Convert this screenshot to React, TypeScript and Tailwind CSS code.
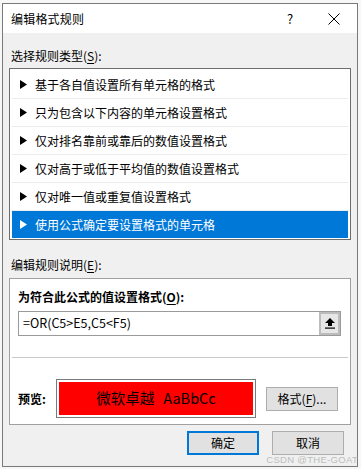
import React from "react";

const font = { fontFamily: '"Noto Sans CJK SC", "Noto Sans", sans-serif' };

function Tri({ white }: { white?: boolean }) {
  return (
    <svg width="7" height="9" viewBox="0 0 7 9" className="shrink-0">
      <polygon points="0,0 7,4.5 0,9" fill={white ? "#ffffff" : "#000000"} />
    </svg>
  );
}

const rules = [
  "基于各自值设置所有单元格的格式",
  "只为包含以下内容的单元格设置格式",
  "仅对排名靠前或靠后的数值设置格式",
  "仅对高于或低于平均值的数值设置格式",
  "仅对唯一值或重复值设置格式",
  "使用公式确定要设置格式的单元格",
];

export default function App() {
  return (
    <div
      className="relative w-[361px] h-[469px] overflow-hidden bg-[#f7f7f7] pt-[3px] pl-[2px] text-black text-[12px] leading-none"
      style={font}
    >
      <div className="w-[356px] h-[464px] border border-[#7a7a7a] bg-[#f0f0f0] flex flex-col">
        {/* title bar */}
        <div className="h-[29px] bg-white flex items-center shrink-0">
          <div className="flex-1 pl-[8px] text-[12px] tracking-[0.2px]">编辑格式规则</div>
          <div className="w-[30px] flex justify-center text-[13px]">?</div>
          <div className="w-[30px] ml-[14px] mr-[8px] flex justify-center">
            <svg width="12" height="12" viewBox="0 0 12 12">
              <path d="M0.5 0.5 L11.5 11.5 M11.5 0.5 L0.5 11.5" stroke="#000" strokeWidth="1" />
            </svg>
          </div>
        </div>

        {/* body */}
        <div className="px-[6px] flex flex-col">
          <div className="mt-[14px] h-[18px] flex items-center pl-[2px]">
            选择规则类型(<span className="underline underline-offset-2">S</span>):
          </div>
          <div className="mt-[3px] h-[172px] border border-[#6e6e6e] bg-white pt-[2px] px-[2px] flex flex-col">
            {rules.map((r, i) => {
              const sel = i === rules.length - 1;
              return (
                <div
                  key={r}
                  className={
                    sel
                      ? "h-[27px] shrink-0 flex items-center gap-[8px] pl-[8px] bg-[#0078d7] text-white"
                      : "h-[28px] shrink-0 flex items-center gap-[8px] pl-[8px] border-b border-[#ececec]"
                  }
                >
                  <Tri white={sel} />
                  <span>{r}</span>
                </div>
              );
            })}
          </div>

          <div className="mt-[16px] h-[18px] flex items-center pl-[2px]">
            编辑规则说明(<span className="underline underline-offset-2">E</span>):
          </div>
          <div className="mt-[4px] h-[147px] border border-[#a0a0a0] bg-white flex flex-col">
            <div className="mt-[9px] h-[18px] flex items-center pl-[8px] font-bold">
              为符合此公式的值设置格式(<span className="underline underline-offset-2">O</span>):
            </div>
            <div className="mt-[5px] ml-[8px] mr-[9px] h-[25px] border border-[#9a9a9a] flex items-stretch">
              <div className="flex-1 flex items-center pl-[4px] text-[12.5px]">=OR(C5&gt;E5,C5&lt;F5)</div>
              <div className="w-[21px] border-[2px] border-[#bcbcbc] bg-[#e6e6e6] flex items-center justify-center">
                <svg width="10" height="11" viewBox="0 0 10 11">
                  <polygon points="5,0 10,5 7,5 7,8 3,8 3,5 0,5" fill="#000" />
                  <rect x="0" y="9.5" width="10" height="1.2" fill="#000" />
                </svg>
              </div>
            </div>
            <div className="mt-[21px] mx-[2px] h-px bg-[#c8c8c8]" />
            <div className="mt-[21px] flex items-center pl-[8px]">
              <div className="w-[38px] font-bold">预览:</div>
              <div className="w-[200px] h-[39px] border border-[#7a7a7a] p-[2px]">
                <div className="h-full bg-[#ff0000] flex items-center justify-center text-[14.5px] text-black">
                  微软卓越<span className="ml-[9px]">AaBbCc</span>
                </div>
              </div>
              <div className="ml-[10px] w-[72px] h-[24px] border border-[#adadad] bg-[#e1e1e1] flex items-center justify-center">
                格式(<span className="underline underline-offset-2">F</span>)...
              </div>
            </div>
          </div>

          <div className="mt-[6px] flex justify-end gap-[13px] pr-[7px]">
            <div className="w-[72px] h-[24px] border-2 border-[#0078d7] bg-[#e1e1e1] flex items-center justify-center">
              确定
            </div>
            <div className="w-[72px] h-[24px] border border-[#adadad] bg-[#e1e1e1] flex items-center justify-center">
              取消
            </div>
          </div>
        </div>
      </div>

      <div
        className="absolute right-[3px] bottom-[5px] text-[9.5px] text-[#bdbdbd] tracking-[0.3px]"
        style={{ fontFamily: '"Liberation Sans", sans-serif' }}
      >
        CSDN @THE-GOAT
      </div>
    </div>
  );
}
